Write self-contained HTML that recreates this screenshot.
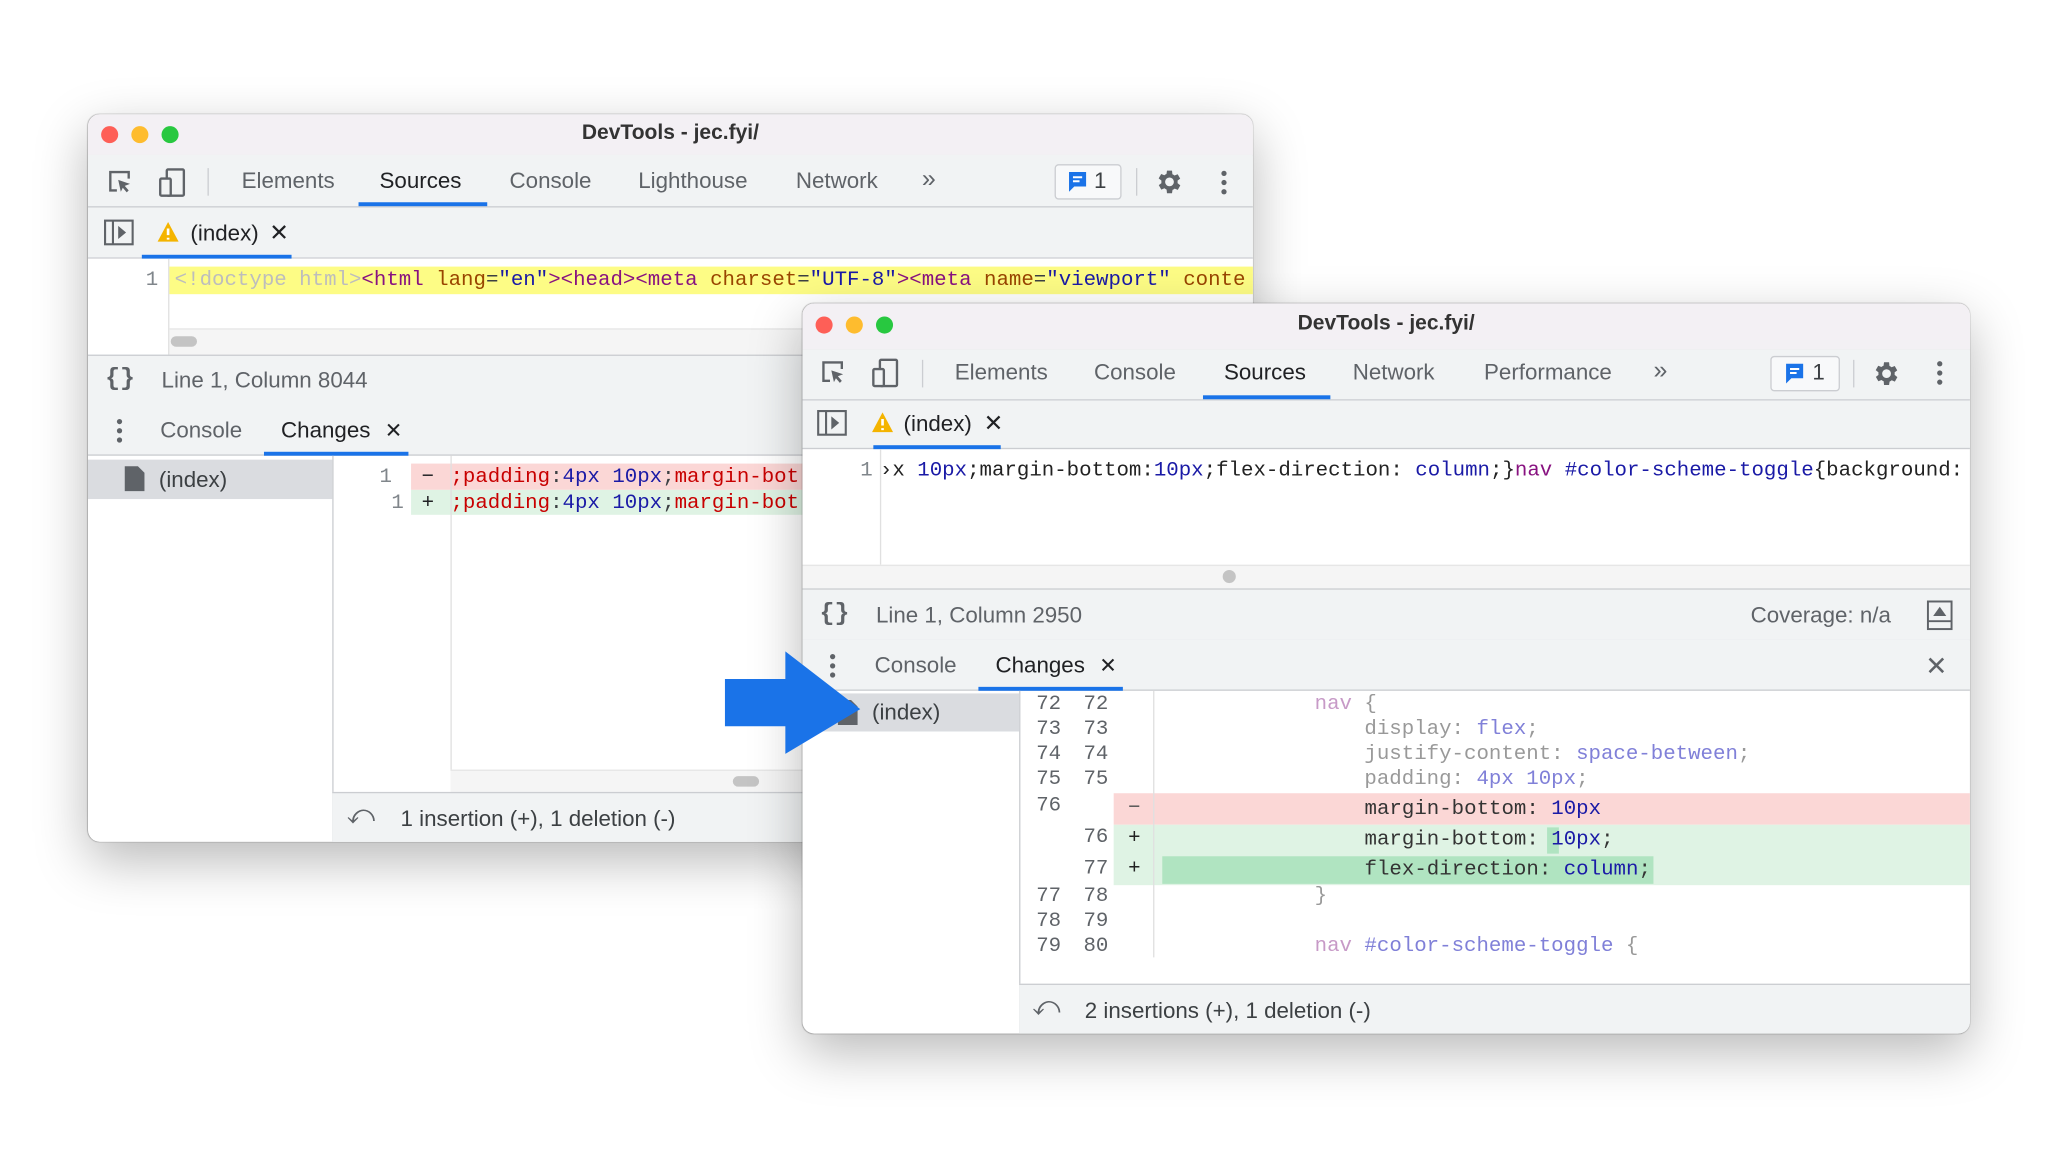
<!DOCTYPE html>
<html><head><meta charset="utf-8"><style>
html,body{margin:0;padding:0;width:2058px;height:1158px;overflow:hidden;background:#fff}
#stage{position:absolute;left:0;top:0;width:1568px;height:882px;transform:scale(1.3133);transform-origin:0 0;font-family:"Liberation Sans",sans-serif;color:#3c4043}
.win{position:absolute;background:#fff;border-radius:9px;overflow:hidden;box-shadow:0 14px 40px rgba(0,0,0,.28),0 0 1px rgba(0,0,0,.4)}
.a{position:absolute;white-space:nowrap}
.title{position:absolute;left:0;right:0;top:0;background:#f3f0f4;border-bottom:1px solid #d6d3d8}
.light{position:absolute;width:13px;height:13px;border-radius:50%}
.bar{position:absolute;left:0;right:0;background:#f1f3f4;border-bottom:1px solid #cbcdd1}
.t{font-size:17px;color:#5f6368}
.sel{color:#202124}
.ul{position:absolute;height:3px;background:#1a73e8}
.mono{font-family:"Liberation Mono",monospace;font-size:15.8px}
.ln{color:#80868b}
</style></head><body><div id="stage">

<!-- Window 1 -->
<div class="win" style="left:67px;top:87px;width:887px;height:554px">
 <div class="title" style="height:31px"></div>
 <div class="light" style="left:10px;top:9px;background:#fe5f57"></div>
 <div class="light" style="left:33px;top:9px;background:#febc2e"></div>
 <div class="light" style="left:56px;top:9px;background:#28c840"></div>
 <div class="a" style="left:0;width:887px;text-align:center;top:6px;font-size:16px;font-weight:bold;color:#333">DevTools - jec.fyi/</div>
 <div class="bar" style="top:31px;height:39px"></div>
 <svg class="a" style="left:14px;top:41px" width="22" height="22" viewBox="0 0 22 22"><path d="M8 17H3V3h14v5" fill="none" stroke="#5f6368" stroke-width="1.8"/><path d="M9 9l9 3-4 1.5 3 3.5-1.5 1.5-3-3.5L11 18z" fill="#5f6368"/></svg>
 <svg class="a" style="left:53px;top:40px" width="22" height="24" viewBox="0 0 22 24"><rect x="7" y="2" width="13" height="20" rx="1" fill="none" stroke="#5f6368" stroke-width="1.8"/><rect x="2" y="9" width="8" height="13" rx="1" fill="#f1f3f4" stroke="#5f6368" stroke-width="1.8"/></svg>
 <div class="a" style="left:91px;top:41px;width:1px;height:21px;background:#cbcdd1"></div>
 <div class="a t" style="left:117px;top:41px">Elements</div>
 <div class="a t sel" style="left:222px;top:41px">Sources</div>
 <div class="ul" style="left:206px;top:67px;width:98px"></div>
 <div class="a t" style="left:321px;top:41px">Console</div>
 <div class="a t" style="left:419px;top:41px">Lighthouse</div>
 <div class="a t" style="left:539px;top:41px">Network</div>
 <div class="a t" style="left:635px;top:39px;font-size:19px">»</div>
 <div class="a" style="left:736px;top:38px;width:49px;height:25px;border:1px solid #cbcdd1;border-radius:3px;background:#f8f9fa"></div>
 <svg class="a" style="left:745px;top:43px" width="17" height="17" viewBox="0 0 17 17"><path d="M2 1h13v11H6l-4 4z" fill="#1a73e8"/><path d="M5 5h7M5 8h5" stroke="#fff" stroke-width="1.5"/></svg>
 <div class="a t" style="left:766px;top:41px;color:#3c4043">1</div>
 <div class="a" style="left:798px;top:41px;width:1px;height:21px;background:#cbcdd1"></div>
 <svg class="a" style="left:812px;top:40px" width="23" height="23" viewBox="0 0 24 24"><path fill="#5f6368" d="M19.4 13a7.5 7.5 0 000-2l2.1-1.6-2-3.5-2.5 1a7 7 0 00-1.7-1L15 3h-4l-.4 2.7a7 7 0 00-1.7 1l-2.5-1-2 3.5L6.6 11a7.5 7.5 0 000 2l-2.1 1.6 2 3.5 2.5-1a7 7 0 001.7 1L11 21h4l.4-2.7a7 7 0 001.7-1l2.5 1 2-3.5zM13 15.5a3.5 3.5 0 110-7 3.5 3.5 0 010 7z" transform="translate(-1 0)"/></svg>
 <svg class="a" style="left:860px;top:41px" width="10" height="22"><circle cx="5" cy="4" r="2" fill="#5f6368"/><circle cx="5" cy="11" r="2" fill="#5f6368"/><circle cx="5" cy="18" r="2" fill="#5f6368"/></svg>

 <div class="bar" style="top:71px;height:38px"></div>
 <svg class="a" style="left:12px;top:80px" width="24" height="21"><rect x="1" y="1" width="21" height="18" fill="none" stroke="#5f6368" stroke-width="1.6"/><line x1="7" y1="1" x2="7" y2="19" stroke="#5f6368" stroke-width="1.6"/><path d="M11 5l6 5-6 5z" fill="#5f6368"/></svg>
 <svg class="a" style="left:52px;top:81px" width="18" height="17"><path d="M9 1L17 16H1z" fill="#f4b400"/><path d="M9 6v5M9 13v1.5" stroke="#fff" stroke-width="2"/></svg>
 <div class="a" style="left:78px;top:81px;font-size:17px;color:#202124">(index)</div>
 <div class="a" style="left:138px;top:80px;font-size:18px;color:#202124">✕</div>
 <div class="ul" style="left:41px;top:107px;width:114px"></div>

 <div class="a" style="left:0;top:110px;width:887px;height:73px;background:#fff"></div>
 <div class="a mono ln" style="left:44px;top:117px">1</div>
 <div class="a" style="left:61px;top:110px;width:1px;height:73px;background:#e0e0e0"></div>
 <div class="a mono" style="left:62px;top:116px;height:21px;width:830px;background:#fdfc85;line-height:21px;padding-left:4px"><span style="color:#bdbdbd">&lt;!doctype html&gt;</span><span style="color:#881280">&lt;html</span> <span style="color:#994500">lang</span>=<span style="color:#1a1aa6">"en"</span><span style="color:#881280">&gt;&lt;head&gt;&lt;meta</span> <span style="color:#994500">charset</span>=<span style="color:#1a1aa6">"UTF-8"</span><span style="color:#881280">&gt;&lt;meta</span> <span style="color:#994500">name</span>=<span style="color:#1a1aa6">"viewport"</span> <span style="color:#994500">conte</span></div>
 <div class="a" style="left:62px;top:163px;width:825px;height:20px;background:#f5f5f5;border-top:1px solid #e6e6e6"></div>
 <div class="a" style="left:63px;top:169px;width:20px;height:8px;border-radius:4px;background:#c4c4c4"></div>

 <div class="bar" style="top:183px;height:37px;border-top:1px solid #cbcdd1"></div>
 <div class="a" style="left:13px;top:190px;font-size:19px;font-family:'Liberation Mono',monospace;color:#5f6368;font-weight:bold">{}</div>
 <div class="a t" style="left:56px;top:193px">Line 1, Column 8044</div>

 <div class="bar" style="top:221px;height:38px"></div>
 <svg class="a" style="left:20px;top:230px" width="8" height="22"><circle cx="4" cy="4" r="2" fill="#5f6368"/><circle cx="4" cy="11" r="2" fill="#5f6368"/><circle cx="4" cy="18" r="2" fill="#5f6368"/></svg>
 <div class="a t" style="left:55px;top:231px">Console</div>
 <div class="a t sel" style="left:147px;top:231px">Changes</div>
 <div class="a" style="left:226px;top:231px;font-size:16px;color:#202124">✕</div>
 <div class="ul" style="left:134px;top:257px;width:110px"></div>

 <div class="a" style="left:0;top:263px;width:186px;height:30px;background:#dadce0"></div>
 <svg class="a" style="left:27px;top:267px" width="17" height="21"><path d="M1 1h10l5 5v14H1z" fill="#5f6368"/></svg>
 <div class="a" style="left:54px;top:269px;font-size:17px;color:#3c4043">(index)</div>
 <div class="a" style="left:186px;top:260px;width:1px;height:294px;background:#cbcdd1"></div>
 <div class="a" style="left:246px;top:266px;width:641px;height:20px;background:#fbd7d6"></div>
 <div class="a" style="left:246px;top:286px;width:641px;height:19px;background:#dff3e4"></div>
 <div class="a mono ln" style="left:222px;top:267px">1</div>
 <div class="a mono ln" style="left:231px;top:287px">1</div>
 <div class="a mono" style="left:254px;top:267px;color:#202124">−</div>
 <div class="a mono" style="left:254px;top:287px;color:#202124">+</div>
 <div class="a" style="left:276px;top:260px;width:1px;height:240px;background:#e0e0e0"></div>
 <div class="a mono" style="left:276px;top:267px"><span style="color:#c80000">;padding</span>:<span style="color:#1a1aa6">4px 10px</span>;<span style="color:#c80000">margin-bot</span></div>
 <div class="a mono" style="left:276px;top:287px"><span style="color:#c80000">;padding</span>:<span style="color:#1a1aa6">4px 10px</span>;<span style="color:#c80000">margin-bot</span></div>
 <div class="a" style="left:276px;top:499px;width:611px;height:17px;background:#f5f5f5;border-top:1px solid #e6e6e6"></div>
 <div class="a" style="left:491px;top:504px;width:20px;height:8px;border-radius:4px;background:#c4c4c4"></div>
 <div class="bar" style="left:186px;top:516px;height:38px;border-top:1px solid #cbcdd1"></div>
 <div class="a" style="left:197px;top:523px;font-size:20px;color:#5f6368">⤺</div>
 <div class="a t" style="left:238px;top:527px;color:#3c4043">1 insertion (+), 1 deletion (-)</div>
</div>

<!-- Window 2 -->
<div class="win" style="left:611px;top:231px;width:889px;height:556px">
 <div class="title" style="height:35px"></div>
 <div class="light" style="left:10px;top:10px;background:#fe5f57"></div>
 <div class="light" style="left:33px;top:10px;background:#febc2e"></div>
 <div class="light" style="left:56px;top:10px;background:#28c840"></div>
 <div class="a" style="left:0;width:889px;text-align:center;top:7px;font-size:16px;font-weight:bold;color:#333">DevTools - jec.fyi/</div>
 <div class="bar" style="top:35px;height:38px"></div>
 <svg class="a" style="left:13px;top:42px" width="22" height="22" viewBox="0 0 22 22"><path d="M8 17H3V3h14v5" fill="none" stroke="#5f6368" stroke-width="1.8"/><path d="M9 9l9 3-4 1.5 3 3.5-1.5 1.5-3-3.5L11 18z" fill="#5f6368"/></svg>
 <svg class="a" style="left:52px;top:41px" width="22" height="24" viewBox="0 0 22 24"><rect x="7" y="2" width="13" height="20" rx="1" fill="none" stroke="#5f6368" stroke-width="1.8"/><rect x="2" y="9" width="8" height="13" rx="1" fill="#f1f3f4" stroke="#5f6368" stroke-width="1.8"/></svg>
 <div class="a" style="left:91px;top:43px;width:1px;height:21px;background:#cbcdd1"></div>
 <div class="a t" style="left:116px;top:43px">Elements</div>
 <div class="a t" style="left:222px;top:43px">Console</div>
 <div class="a t sel" style="left:321px;top:43px">Sources</div>
 <div class="ul" style="left:305px;top:70px;width:97px"></div>
 <div class="a t" style="left:419px;top:43px">Network</div>
 <div class="a t" style="left:519px;top:43px">Performance</div>
 <div class="a t" style="left:648px;top:41px;font-size:19px">»</div>
 <div class="a" style="left:737px;top:40px;width:51px;height:25px;border:1px solid #cbcdd1;border-radius:3px;background:#f8f9fa"></div>
 <svg class="a" style="left:747px;top:45px" width="17" height="17" viewBox="0 0 17 17"><path d="M2 1h13v11H6l-4 4z" fill="#1a73e8"/><path d="M5 5h7M5 8h5" stroke="#fff" stroke-width="1.5"/></svg>
 <div class="a t" style="left:769px;top:43px;color:#3c4043">1</div>
 <div class="a" style="left:800px;top:43px;width:1px;height:21px;background:#cbcdd1"></div>
 <svg class="a" style="left:814px;top:42px" width="23" height="23" viewBox="0 0 24 24"><path fill="#5f6368" d="M19.4 13a7.5 7.5 0 000-2l2.1-1.6-2-3.5-2.5 1a7 7 0 00-1.7-1L15 3h-4l-.4 2.7a7 7 0 00-1.7 1l-2.5-1-2 3.5L6.6 11a7.5 7.5 0 000 2l-2.1 1.6 2 3.5 2.5-1a7 7 0 001.7 1L11 21h4l.4-2.7a7 7 0 001.7-1l2.5 1 2-3.5zM13 15.5a3.5 3.5 0 110-7 3.5 3.5 0 010 7z" transform="translate(-1 0)"/></svg>
 <svg class="a" style="left:861px;top:42px" width="10" height="22"><circle cx="5" cy="4" r="2" fill="#5f6368"/><circle cx="5" cy="11" r="2" fill="#5f6368"/><circle cx="5" cy="18" r="2" fill="#5f6368"/></svg>

 <div class="bar" style="top:74px;height:36px"></div>
 <svg class="a" style="left:11px;top:81px" width="24" height="21"><rect x="1" y="1" width="21" height="18" fill="none" stroke="#5f6368" stroke-width="1.6"/><line x1="7" y1="1" x2="7" y2="19" stroke="#5f6368" stroke-width="1.6"/><path d="M11 5l6 5-6 5z" fill="#5f6368"/></svg>
 <svg class="a" style="left:52px;top:82px" width="18" height="17"><path d="M9 1L17 16H1z" fill="#f4b400"/><path d="M9 6v5M9 13v1.5" stroke="#fff" stroke-width="2"/></svg>
 <div class="a" style="left:77px;top:82px;font-size:17px;color:#202124">(index)</div>
 <div class="a" style="left:138px;top:81px;font-size:18px;color:#202124">✕</div>
 <div class="ul" style="left:54px;top:108px;width:97px"></div>

 <div class="a mono ln" style="left:44px;top:118px">1</div>
 <div class="a" style="left:59px;top:111px;width:1px;height:88px;background:#e0e0e0"></div>
 <div class="a mono" style="left:59px;top:118px;color:#222">›x <span style="color:#1a1aa6">10px</span>;margin-bottom:<span style="color:#1a1aa6">10px</span>;flex-direction: <span style="color:#1a1aa6">column</span>;}<span style="color:#881280">nav</span> <span style="color:#1a1aa6">#color-scheme-toggle</span>{background:</div>
 <div class="a" style="left:0;top:199px;width:889px;height:18px;background:#f5f5f5;border-top:1px solid #e6e6e6"></div>
 <div class="a" style="left:320px;top:203px;width:10px;height:10px;border-radius:5px;background:#c4c4c4"></div>

 <div class="bar" style="top:217px;height:38px;border-top:1px solid #cbcdd1"></div>
 <div class="a" style="left:13px;top:225px;font-size:19px;font-family:'Liberation Mono',monospace;color:#5f6368;font-weight:bold">{}</div>
 <div class="a t" style="left:56px;top:228px">Line 1, Column 2950</div>
 <div class="a t" style="left:722px;top:228px">Coverage: n/a</div>
 <svg class="a" style="left:856px;top:226px" width="20" height="24"><rect x="1" y="1" width="18" height="21" fill="none" stroke="#5f6368" stroke-width="1.5"/><path d="M10 5l5 7H5z" fill="#5f6368"/><line x1="1" y1="16" x2="19" y2="16" stroke="#5f6368" stroke-width="1.5"/></svg>

 <div class="bar" style="top:256px;height:38px"></div>
 <svg class="a" style="left:19px;top:265px" width="8" height="22"><circle cx="4" cy="4" r="2" fill="#5f6368"/><circle cx="4" cy="11" r="2" fill="#5f6368"/><circle cx="4" cy="18" r="2" fill="#5f6368"/></svg>
 <div class="a t" style="left:55px;top:266px">Console</div>
 <div class="a t sel" style="left:147px;top:266px">Changes</div>
 <div class="a" style="left:226px;top:266px;font-size:16px;color:#202124">✕</div>
 <div class="ul" style="left:134px;top:292px;width:110px"></div>
 <div class="a" style="left:855px;top:264px;font-size:20px;color:#5f6368">✕</div>

 <div class="a" style="left:0;top:297px;width:165px;height:29px;background:#dadce0"></div>
 <svg class="a" style="left:26px;top:301px" width="17" height="21"><path d="M1 1h10l5 5v14H1z" fill="#5f6368"/></svg>
 <div class="a" style="left:53px;top:302px;font-size:17px;color:#3c4043">(index)</div>
 <div class="a" style="left:165px;top:295px;width:1px;height:261px;background:#cbcdd1"></div>

 <div class="a" style="left:237px;top:373px;width:652px;height:24px;background:#fbd7d6"></div>
 <div class="a" style="left:237px;top:397px;width:652px;height:46px;background:#dff3e4"></div>
 <div class="a" style="left:274px;top:421px;width:374px;height:21px;background:#b0e4c1"></div>
 <div class="a" style="left:567px;top:399px;width:9px;height:20px;background:#b0e4c1"></div>
 <div class="a" style="left:267px;top:295px;width:1px;height:203px;background:#e0e0e0"></div>

 <div class="a mono ln" style="left:178px;top:296px;line-height:19px;color:#5f6368">72<br>73<br>74<br>75</div>
 <div class="a mono ln" style="left:214px;top:296px;line-height:19px;color:#5f6368">72<br>73<br>74<br>75</div>
 <div class="a mono" style="left:178px;top:373px;color:#5f6368">76</div>
 <div class="a mono" style="left:214px;top:397px;color:#5f6368">76</div>
 <div class="a mono" style="left:214px;top:421px;color:#5f6368">77</div>
 <div class="a mono" style="left:178px;top:442px;line-height:19px;color:#5f6368">77<br>78<br>79</div>
 <div class="a mono" style="left:214px;top:442px;line-height:19px;color:#5f6368">78<br>79<br>80</div>
 <div class="a mono" style="left:248px;top:375px;color:#555">−</div>
 <div class="a mono" style="left:248px;top:398px;color:#222">+</div>
 <div class="a mono" style="left:248px;top:421px;color:#222">+</div>

 <div class="a mono" style="left:390px;top:296px;line-height:19px;color:#999"><span style="color:#c79ac7">nav</span> {<br>&nbsp;&nbsp;&nbsp;&nbsp;display: <span style="color:#8080d8">flex</span>;<br>&nbsp;&nbsp;&nbsp;&nbsp;justify-content: <span style="color:#8080d8">space-between</span>;<br>&nbsp;&nbsp;&nbsp;&nbsp;padding: <span style="color:#8080d8">4px 10px</span>;</div>
 <div class="a mono" style="left:428px;top:376px;color:#333">margin-bottom: <span style="color:#1a1aa6">10px</span></div>
 <div class="a mono" style="left:428px;top:399px;color:#333">margin-bottom: <span style="color:#1a1aa6">10px</span>;</div>
 <div class="a mono" style="left:428px;top:422px;color:#333">flex-direction: <span style="color:#1a1aa6">column</span>;</div>
 <div class="a mono" style="left:390px;top:442px;line-height:19px;color:#999">}<br>&nbsp;<br><span style="color:#c79ac7">nav</span> <span style="color:#8080d8">#color-scheme-toggle</span> {</div>

 <div class="bar" style="left:165px;top:518px;height:38px;border-top:1px solid #cbcdd1"></div>
 <div class="a" style="left:175px;top:525px;font-size:20px;color:#5f6368">⤺</div>
 <div class="a t" style="left:215px;top:529px;color:#3c4043">2 insertions (+), 1 deletion (-)</div>
</div>

<!-- Arrow -->
<svg class="a" style="left:550px;top:494px" width="110" height="82" viewBox="0 0 110 82"><path d="M2 23H48V2L105 46L48 80V59H2z" fill="#1a73e8"/></svg>
</div></body></html>
